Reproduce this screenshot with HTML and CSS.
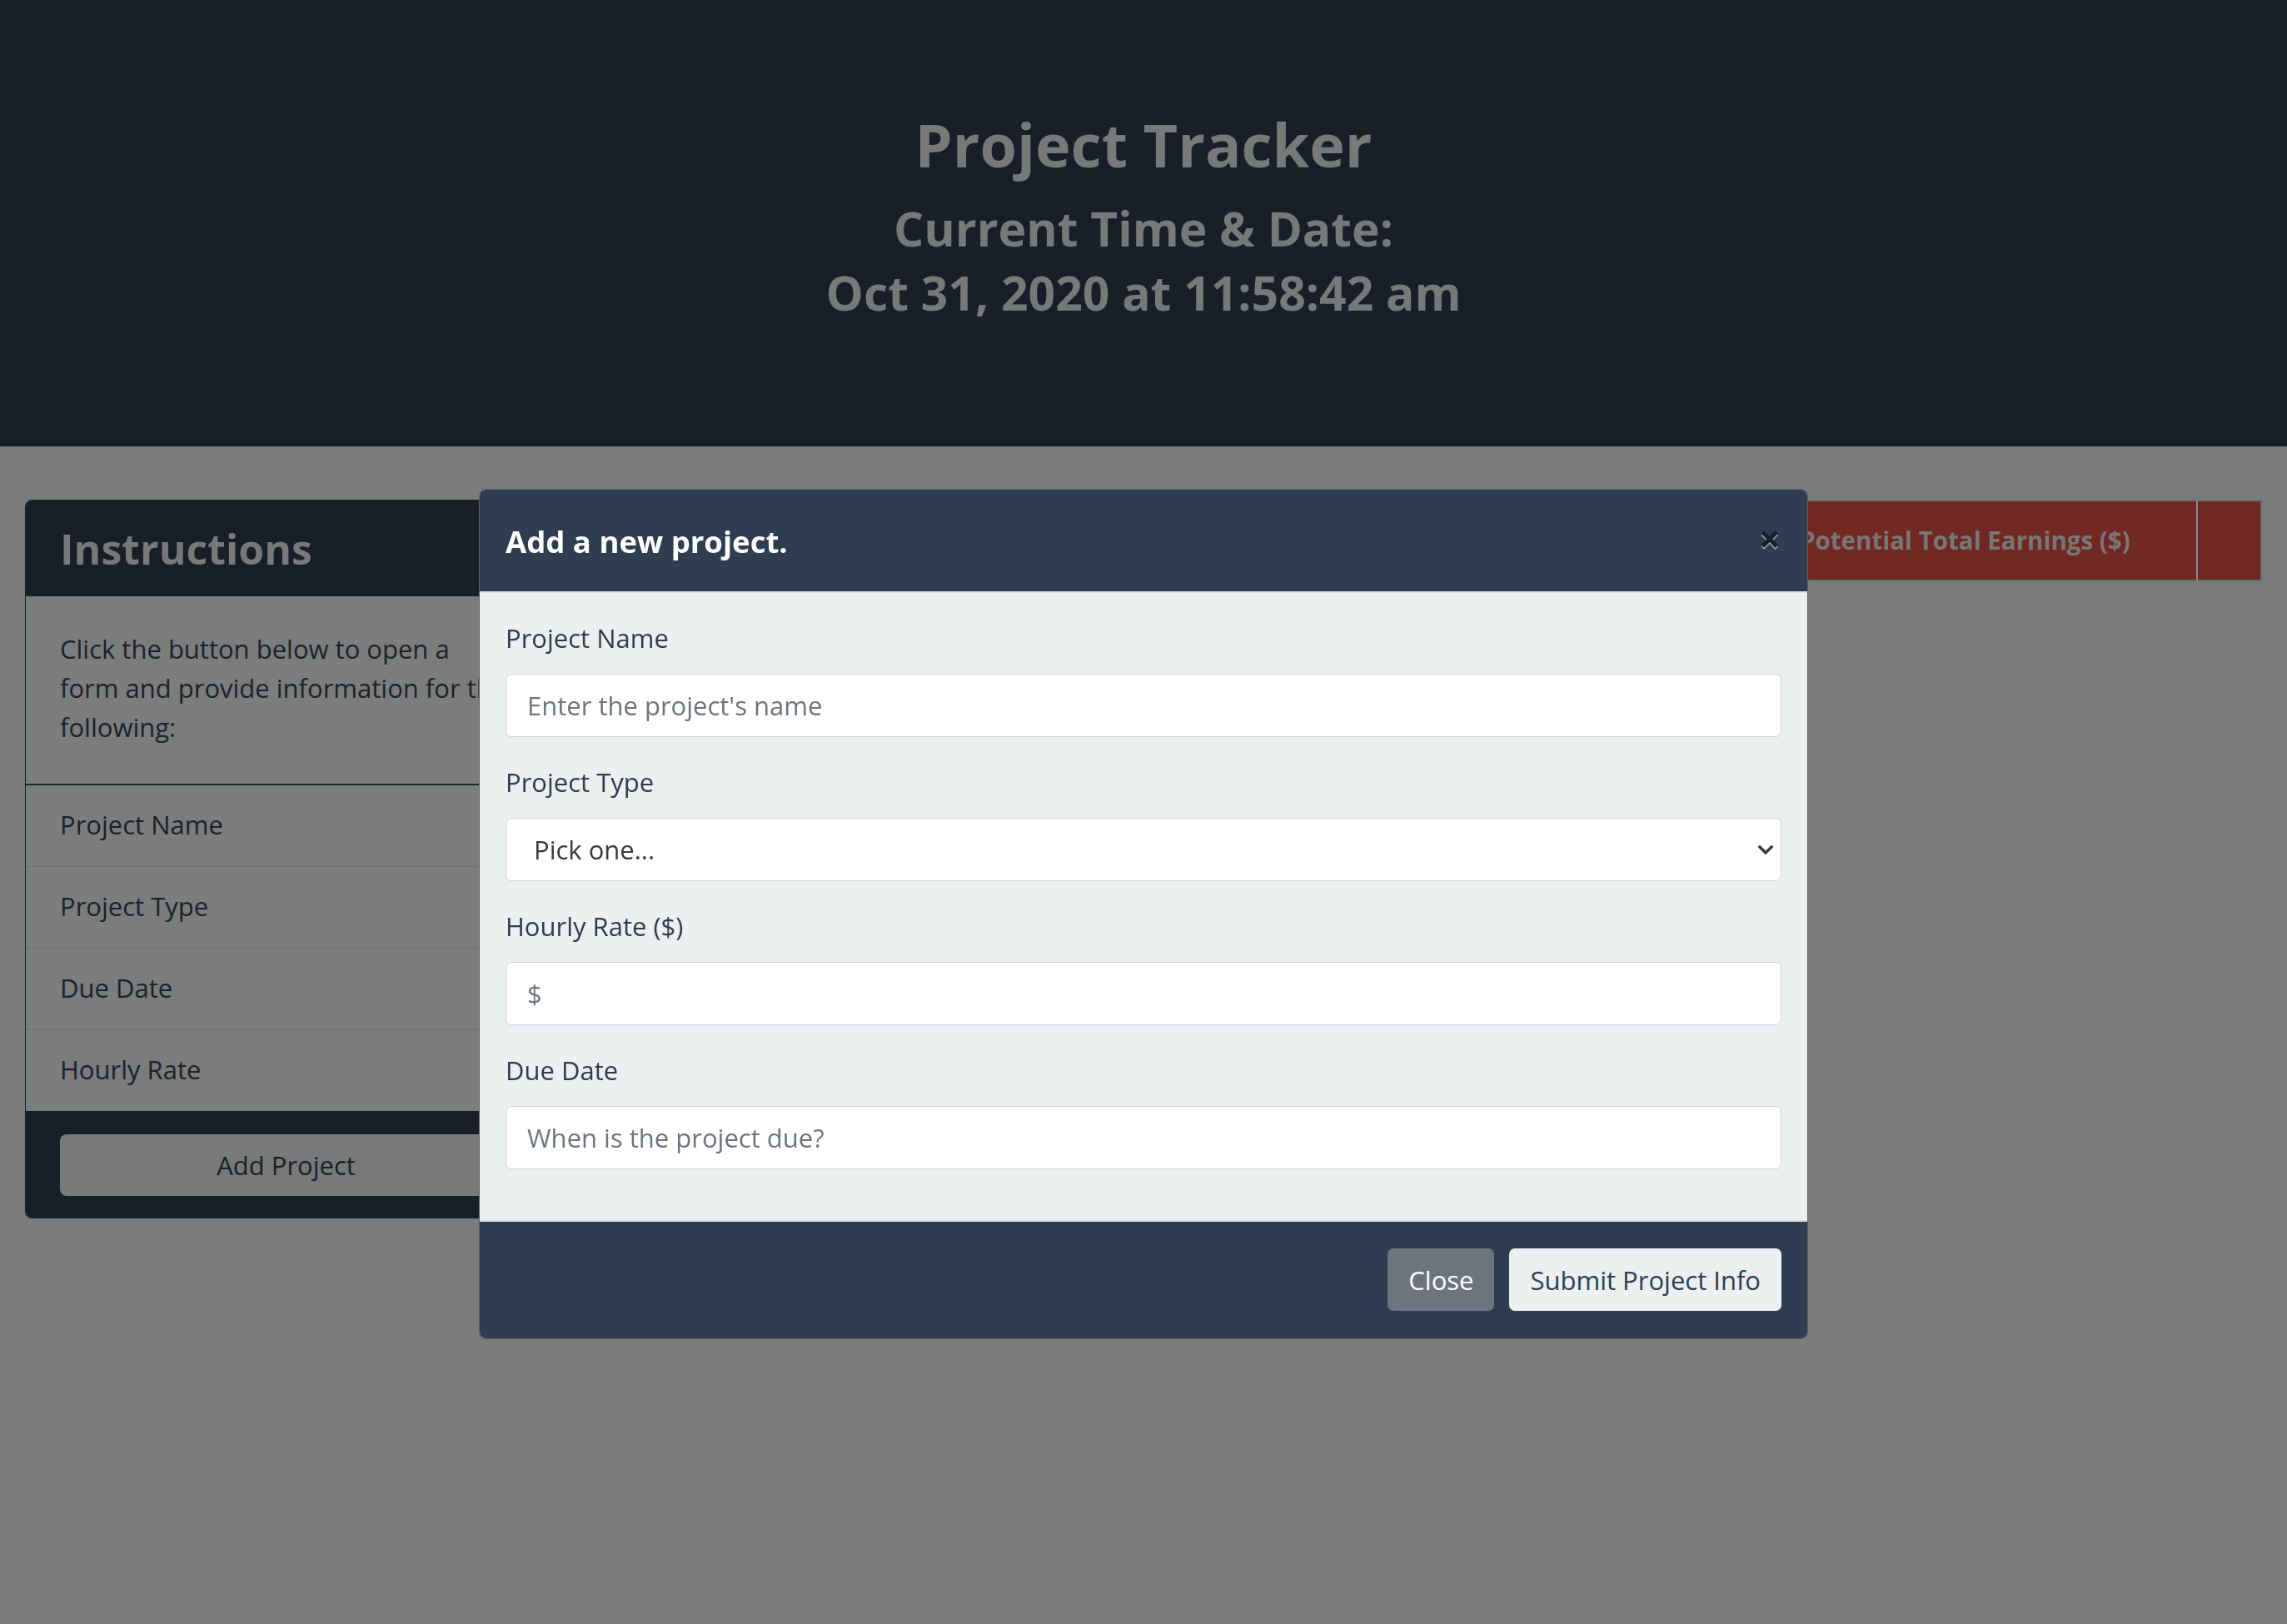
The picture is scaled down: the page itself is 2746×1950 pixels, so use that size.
FILE: index.html
```html
<!DOCTYPE html>
<html lang="en">
<head>
<meta charset="utf-8">
<title>Project Tracker</title>
<link rel="stylesheet" href="styles.css">
</head>
<body>
<header class="hero">
  <h1 class="hero-title">Project Tracker</h1>
  <h2 class="hero-sub">Current Time &amp; Date:</h2>
  <h2 class="hero-sub">Oct 31, 2020 at 11:58:42 am</h2>
</header>

<main class="content">
  <section class="card">
    <div class="card-header">
      <h3 class="card-title">Instructions</h3>
    </div>
    <div class="card-body">
      <p class="card-text">Click the button below to open a<br>form and provide information for the<br>following:</p>
    </div>
    <ul class="list">
      <li class="list-item">Project Name</li>
      <li class="list-item">Project Type</li>
      <li class="list-item">Due Date</li>
      <li class="list-item">Hourly Rate</li>
    </ul>
    <div class="card-footer">
      <button class="btn-add" type="button">Add Project</button>
    </div>
  </section>

  <section class="table-wrap">
    <table class="projects">
      <colgroup>
        <col><col><col><col><col>
        <col class="col-earn">
        <col class="col-del">
      </colgroup>
      <thead>
        <tr>
          <th></th>
          <th></th>
          <th></th>
          <th></th>
          <th></th>
          <th>Potential Total Earnings ($)</th>
          <th></th>
        </tr>
      </thead>
    </table>
  </section>
</main>

<div class="modal-layer">
  <div class="modal">
    <div class="modal-header">
      <h5 class="modal-title">Add a new project.</h5>
      <button class="close" type="button" aria-label="Close">&times;</button>
    </div>
    <div class="modal-body">
      <div class="field">
        <label class="field-label" for="pname">Project Name</label>
        <input class="field-input" id="pname" type="text" placeholder="Enter the project's name">
      </div>
      <div class="field">
        <label class="field-label" for="ptype">Project Type</label>
        <div class="select-wrap">
          <select class="field-input field-select" id="ptype">
            <option>Pick one...</option>
          </select>
          <svg class="chevron" width="18" height="11" viewBox="0 0 18 11"><path d="M2 2 L9 9 L16 2" fill="none" stroke="#343a40" stroke-width="3.4" stroke-linecap="square"/></svg>
        </div>
      </div>
      <div class="field">
        <label class="field-label" for="prate">Hourly Rate ($)</label>
        <input class="field-input" id="prate" type="text" placeholder="$">
      </div>
      <div class="field">
        <label class="field-label" for="pdue">Due Date</label>
        <input class="field-input" id="pdue" type="text" placeholder="When is the project due?">
      </div>
    </div>
    <div class="modal-footer">
      <button class="btn btn-secondary" type="button">Close</button>
      <button class="btn btn-light" type="button">Submit Project Info</button>
    </div>
  </div>
</div>
</body>
</html>
```

FILE: styles.css
```css
html, body {
  margin: 0;
  padding: 0;
  background: #7a7c7b;
  font-family: "Open Sans", "Noto Sans", sans-serif;
}

body {
  min-height: 1950px;
}

/* ---------- hero ---------- */
.hero {
  box-sizing: border-box;
  height: 536px;
  padding-top: 130px;
  background: #181f29;
  text-align: center;
  color: #777878;
}

.hero-title {
  margin: 0 0 20px;
  font-size: 72px;
  line-height: 86px;
  font-weight: 700;
}

.hero-sub {
  margin: 0;
  font-size: 57px;
  line-height: 77px;
  font-weight: 700;
}

/* ---------- content ---------- */
.content {
  display: flex;
  align-items: flex-start;
  gap: 35px;
  padding: 64px 30px 0;
}

.card {
  flex: none;
  width: 627px;
  box-sizing: border-box;
  border: 1px solid #181f29;
  border-radius: 8px;
  overflow: hidden;
  background: #7b7c7c;
}

.card-header {
  background: #181f29;
  padding: 28px 41px 27px;
}

.card-title {
  margin: 0;
  font-size: 50px;
  line-height: 60px;
  font-weight: 700;
  color: #787878;
}

.card-body {
  padding: 40px 41px 44px;
}

.card-text {
  margin: 0;
  font-size: 31px;
  line-height: 47px;
  color: #1b222b;
  white-space: nowrap;
}

.list {
  margin: 0;
  padding: 0;
  list-style: none;
  border-top: 2px solid #1f262e;
}

.list-item {
  padding: 24px 41px 26px;
  font-size: 31px;
  line-height: 47px;
  color: #1b222b;
  border-bottom: 1px solid #6e7070;
}

.list-item:last-child {
  border-bottom: 0;
}

.card-footer {
  background: #181f29;
  padding: 28px 41px 26px;
}

.btn-add {
  display: block;
  width: 100%;
  height: 74px;
  border: 0;
  border-radius: 8px;
  background: #787a79;
  color: #18202a;
  font-family: inherit;
  font-size: 31px;
}

/* ---------- table ---------- */
.table-wrap {
  flex: 1;
  min-width: 0;
}

.projects {
  width: 100%;
  border-collapse: collapse;
  table-layout: fixed;
  border: 2px solid #6c6e6e;
}

.col-earn { width: 499px; }
.col-del { width: 77px; }

.projects th {
  background: #722822;
  color: #777777;
  font-size: 29.5px;
  line-height: 44px;
  font-weight: 700;
  text-align: left;
  padding: 25px 21px;
  white-space: nowrap;
  overflow: hidden;
  border-left: 2px solid #8a8b8b;
}

.projects th:first-child {
  border-left: 0;
}

/* ---------- modal ---------- */
.modal-layer {
  position: fixed;
  inset: 0;
  display: flex;
  justify-content: center;
  align-items: flex-start;
  padding-top: 587px;
}

.modal {
  width: 1596px;
  box-sizing: border-box;
  background: #ecf0f1;
  border: 1px solid #5f6160;
  border-radius: 8px;
  overflow: hidden;
}

.modal-header {
  display: flex;
  justify-content: space-between;
  align-items: center;
  background: #2e3e50;
  padding: 40px 31px 38px;
  border-bottom: 2px solid #dce1e4;
}

.modal-title {
  margin: 0;
  font-size: 36.5px;
  line-height: 44px;
  font-weight: 700;
  color: #ffffff;
}

.close {
  background: none;
  border: 0;
  padding: 0;
  margin: -8px 1px 0 0;
  font-family: inherit;
  font-size: 46px;
  font-weight: 700;
  line-height: 1;
  color: #171f28;
  text-shadow: 0 2px 0 rgba(255, 255, 255, 0.55);
}

.modal-body {
  padding: 31px 31px 30px;
}

.field {
  margin-bottom: 31.5px;
}

.field-label {
  display: block;
  margin-bottom: 18.5px;
  font-size: 31px;
  line-height: 47px;
  color: #2c3e50;
}

.field-input {
  display: block;
  width: 100%;
  height: 76px;
  box-sizing: border-box;
  padding: 0 25px;
  border: 1px solid #ced4da;
  border-radius: 7px;
  background: #ffffff;
  font-family: inherit;
  font-size: 31px;
  color: #495057;
}

.field-input::placeholder {
  color: #6c757d;
}

.select-wrap {
  position: relative;
}

.field-select {
  appearance: none;
  -webkit-appearance: none;
  padding-left: 33px;
  color: #343a40;
}

.chevron {
  position: absolute;
  right: 10px;
  top: 33px;
}

.modal-footer {
  display: flex;
  justify-content: flex-end;
  gap: 18px;
  background: #2e3e50;
  border-top: 2px solid #dce1e4;
  padding: 32px 31px 33px;
}

.btn {
  height: 75px;
  padding: 0 25px;
  border: 0;
  border-radius: 7px;
  font-family: inherit;
  font-size: 31px;
}

.btn-secondary {
  background: #6c757d;
  color: #ffffff;
}

.btn-light {
  background: #ecf0f1;
  color: #2c3e50;
}
```
